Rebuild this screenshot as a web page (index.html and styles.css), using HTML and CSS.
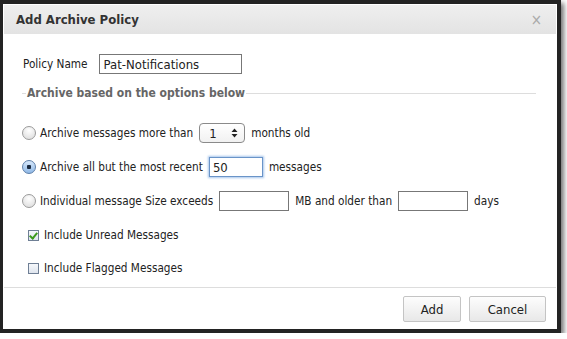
FILE: index.html
```html
<!DOCTYPE html>
<html lang="en">
<head>
    <meta charset="UTF-8">
    <meta name="viewport" content="width=device-width, initial-scale=1.0">
    <title>Add Archive Policy</title>
    <link rel="stylesheet" href="styles.css">
</head>
<body>

<div class="dialog">
    <div class="header">
        <span class="title">Add Archive Policy</span>
        <span class="close">&times;</span>
    </div>

    <div class="content">
        <div class="name-row">
            <label for="policyName">Policy Name</label>
            <input type="text" id="policyName" class="text-input name-input" value="Pat-Notifications">
        </div>

        <fieldset class="options">
            <legend>Archive based on the options below</legend>

            <div class="option">
                <input type="radio" name="mode" id="modeMonths" class="radio">
                <label for="modeMonths">Archive messages more than</label>
                <span class="select-wrap">
                    <select class="select">
                        <option>1</option>
                        <option>2</option>
                        <option>3</option>
                        <option>6</option>
                        <option>12</option>
                    </select>
                    <svg class="select-arrows" width="7" height="10" viewBox="0 0 7 10">
                        <path d="M3.5 0.5 L6.5 4 L0.5 4 Z M3.5 9.5 L6.5 6 L0.5 6 Z" fill="#222"/>
                    </svg>
                </span>
                <span>months old</span>
            </div>

            <div class="option">
                <input type="radio" name="mode" id="modeRecent" class="radio" checked>
                <label for="modeRecent">Archive all but the most recent</label>
                <input type="text" class="text-input recent-input focused" value="50">
                <span>messages</span>
            </div>

            <div class="option">
                <input type="radio" name="mode" id="modeSize" class="radio">
                <label for="modeSize">Individual message Size exceeds</label>
                <input type="text" class="text-input size-input">
                <span>MB and older than</span>
                <input type="text" class="text-input size-input">
                <span>days</span>
            </div>
        </fieldset>

        <div class="check-row">
            <input type="checkbox" id="unread" class="check" checked>
            <label for="unread">Include Unread Messages</label>
        </div>
        <div class="check-row">
            <input type="checkbox" id="flagged" class="check">
            <label for="flagged">Include Flagged Messages</label>
        </div>
    </div>

    <div class="footer">
        <button class="btn btn-add">Add</button>
        <button class="btn btn-cancel">Cancel</button>
    </div>
</div>

</body>
</html>
```

FILE: styles.css
```css
body {
    margin: 0;
    background: #fff;
    font-family: Tahoma, "DejaVu Sans Condensed", "DejaVu Sans", sans-serif;
    font-size: 11.7px;
    color: #222;
}
.dialog {
    width: 552px;
    height: 323px;
    background: #fff;
    border: 4px solid #232323;
    border-left-width: 3px;
    box-shadow: 3px 3px 5px rgba(0, 0, 0, 0.55);
    padding: 1px;
    display: flex;
    flex-direction: column;
}
.header {
    height: 29px;
    flex-shrink: 0;
    background: linear-gradient(#efefef, #e3e3e3);
    display: flex;
    align-items: center;
    justify-content: space-between;
    padding: 0 14px 0 12px;
}
.title {
    font-weight: bold;
    font-size: 13px;
    color: #333;
}
.close {
    color: #aaa;
    font-size: 15px;
}
.content {
    flex: 1;
    min-height: 0;
    padding: 20px 20px 0 18px;
}
.name-row {
    display: flex;
    align-items: center;
    gap: 11px;
    padding-left: 1px;
}
.text-input {
    height: 20px;
    box-sizing: border-box;
    border: 1px solid #777;
    padding: 0 4px;
    font-family: inherit;
    font-size: 12px;
    color: #222;
    outline: none;
}
.name-input {
    width: 143px;
    font-size: 13px;
}
.options {
    border: none;
    border-top: 1px solid #ddd;
    margin: 12px 0 0 0;
    padding: 23px 0 0 0;
}
.options legend {
    font-weight: bold;
    color: #666;
    font-size: 12px;
    padding: 0 1px;
    margin-left: 4px;
}
.option {
    display: flex;
    align-items: center;
    gap: 6px;
    height: 20px;
    margin-bottom: 14px;
}
.radio {
    appearance: none;
    -webkit-appearance: none;
    width: 14px;
    height: 14px;
    margin: 0 -2px 0 0;
    border-radius: 50%;
    border: 1px solid #9a9a9a;
    background: radial-gradient(circle at 50% 30%, #fff, #e4e4e4 70%);
    box-sizing: border-box;
}
.radio:checked {
    border-color: #5c7ea8;
    background: radial-gradient(circle, #1a2a40 0 2px, transparent 2.5px),
                linear-gradient(#d7e8fb, #8fb8e6);
}
.select-wrap {
    position: relative;
    display: inline-block;
    height: 20px;
}
.select {
    appearance: none;
    -webkit-appearance: none;
    width: 46px;
    height: 20px;
    border: 1px solid #8a8a8a;
    border-radius: 4px;
    background: linear-gradient(#fff, #f1f1f1);
    padding: 0 0 0 9px;
    font-family: inherit;
    font-size: 13px;
    color: #222;
}
.select-arrows {
    position: absolute;
    right: 7px;
    top: 5px;
    pointer-events: none;
}
.recent-input {
    width: 54px;
    font-size: 13px;
    padding-left: 3px;
}
.focused {
    border: 1px solid #6a94c8;
    box-shadow: 0 0 2px 1px #a8c6ec;
}
.size-input {
    width: 70px;
}
.check-row {
    display: flex;
    align-items: center;
    height: 20px;
    padding-left: 6px;
    margin-bottom: 13px;
}
.check-row:last-child {
    margin-bottom: 0;
}
.check {
    appearance: none;
    -webkit-appearance: none;
    width: 11px;
    height: 11px;
    margin: 0 5px 0 0;
    border: 1px solid #6f7f95;
    background: linear-gradient(#f6f8fb, #dfe5ee);
    box-sizing: border-box;
    position: relative;
}
.check:checked::after {
    content: "";
    position: absolute;
    left: 2px;
    top: 0px;
    width: 3px;
    height: 6px;
    border: solid #3c9a1c;
    border-width: 0 2px 2px 0;
    transform: rotate(40deg);
}
.footer {
    border-top: 1px solid #ddd;
    height: 41px;
    flex-shrink: 0;
    display: flex;
    justify-content: flex-end;
    align-items: flex-start;
    gap: 8px;
    padding: 8px 10px 0 0;
    box-sizing: border-box;
}
.btn {
    height: 26px;
    border: 1px solid #c4c4c4;
    border-radius: 2px;
    background: linear-gradient(#fdfdfd, #e8e8e8);
    font-family: inherit;
    font-size: 13px;
    color: #222;
}
.btn-add {
    width: 58px;
}
.btn-cancel {
    width: 77px;
}
```
